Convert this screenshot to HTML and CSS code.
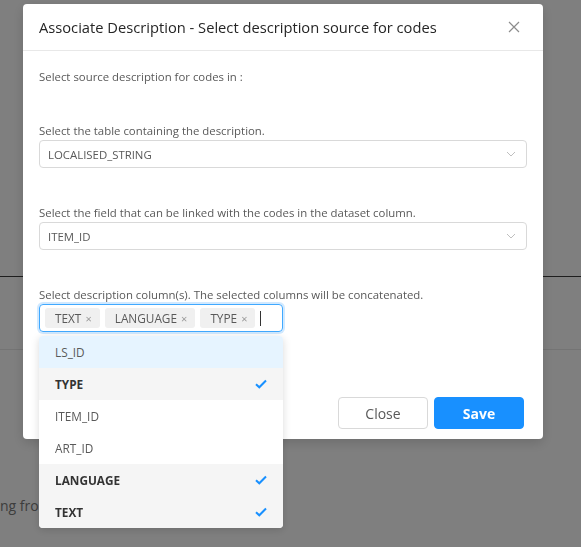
FILE: index.html
```html
<!DOCTYPE html>
<html>
<head>
<meta charset="utf-8">
<link rel="stylesheet" href="styles.css">
</head>
<body>
<div class="page">
  <div class="page-top"></div>
  <div class="page-rule dark"></div>
  <div class="page-band"></div>
  <div class="page-rule light"></div>
  <div class="page-gap"></div>
  <p class="page-text">ng from</p>
</div>
<div class="mask"></div>

<div class="modal">
  <div class="modal-header">
    <span class="modal-title">Associate Description - Select description source for codes</span>
    <svg class="close-x" width="12" height="12" viewBox="0 0 12 12"><path d="M1 1L11 11M11 1L1 11" stroke="#8c8c8c" stroke-width="1.2" fill="none"/></svg>
  </div>
  <div class="modal-body">
    <p class="intro">Select source description for codes in :</p>

    <div class="field">
      <label class="label">Select the table containing the description.</label>
      <div class="select">
        <span>LOCALISED_STRING</span>
        <svg class="chev" width="10" height="6" viewBox="0 0 10 6"><path d="M1 1L5 5L9 1" stroke="#bfbfbf" stroke-width="1" fill="none"/></svg>
      </div>
    </div>

    <div class="field">
      <label class="label">Select the field that can be linked with the codes in the dataset column.</label>
      <div class="select">
        <span>ITEM_ID</span>
        <svg class="chev" width="10" height="6" viewBox="0 0 10 6"><path d="M1 1L5 5L9 1" stroke="#bfbfbf" stroke-width="1" fill="none"/></svg>
      </div>
    </div>

    <div class="field">
      <label class="label">Select description column(s). The selected columns will be concatenated.</label>
      <div class="multi">
        <span class="tag">TEXT <i class="tag-x">×</i></span>
        <span class="tag">LANGUAGE <i class="tag-x">×</i></span>
        <span class="tag">TYPE <i class="tag-x">×</i></span>
        <span class="caret"></span>
      </div>
    </div>
  </div>
  <div class="modal-footer">
    <button class="btn">Close</button>
    <button class="btn primary">Save</button>
  </div>
</div>

<ul class="dropdown">
  <li class="opt active">LS_ID</li>
  <li class="opt selected">TYPE <svg class="check" width="12" height="10" viewBox="0 0 12 10"><path d="M1 5.2L4.3 8.3L11 1.5" stroke="#1890ff" stroke-width="2" fill="none"/></svg></li>
  <li class="opt">ITEM_ID</li>
  <li class="opt">ART_ID</li>
  <li class="opt selected">LANGUAGE <svg class="check" width="12" height="10" viewBox="0 0 12 10"><path d="M1 5.2L4.3 8.3L11 1.5" stroke="#1890ff" stroke-width="2" fill="none"/></svg></li>
  <li class="opt selected">TEXT <svg class="check" width="12" height="10" viewBox="0 0 12 10"><path d="M1 5.2L4.3 8.3L11 1.5" stroke="#1890ff" stroke-width="2" fill="none"/></svg></li>
</ul>
</body>
</html>
```
FILE: styles.css
```css
* { box-sizing: border-box; }
html, body { margin: 0; padding: 0; }
body {
  width: 581px;
  height: 547px;
  overflow: hidden;
  background: #fff;
  font-family: "Segoe UI", "Open Sans", "Noto Sans", sans-serif;
  color: #595959;
}
.page { width: 581px; }
.page-top { height: 276px; }
.page-rule { height: 1px; }
.page-rule.dark { background: #3c3c3c; }
.page-rule.light { background: #e8e8e8; }
.page-band { height: 72px; }
.page-gap { height: 146px; }
.page-text {
  margin: 0;
  font-size: 14px;
  line-height: 20px;
  color: #7a7a7a;
  text-indent: 0;
}
.mask {
  position: fixed;
  inset: 0;
  background: rgba(0, 0, 0, 0.5);
}
.modal {
  position: fixed;
  left: 23px;
  top: 4px;
  width: 520px;
  background: #fff;
  border-radius: 4px;
  box-shadow: 0 4px 12px rgba(0, 0, 0, 0.15);
}
.modal-header {
  display: flex;
  align-items: center;
  justify-content: space-between;
  height: 47px;
  padding: 0 23px 0 16px;
  border-bottom: 1px solid #e8e8e8;
}
.modal-title {
  font-size: 14.7px;
  color: #262626;
}
.close-x { display: block; }
.modal-body {
  padding: 17px 16px 55px;
}
.intro {
  margin: 0;
  font-size: 11.4px;
  line-height: 18px;
  color: #595959;
}
.field {
  margin-top: 36px;
}
.label {
  display: block;
  font-size: 11.4px;
  line-height: 18px;
  color: #595959;
}
.select {
  display: flex;
  align-items: center;
  justify-content: space-between;
  height: 28px;
  padding: 0 10px 0 8px;
  border: 1px solid #d9d9d9;
  border-radius: 4px;
  font-size: 11.4px;
  color: #595959;
}
.chev { display: block; }
.multi {
  display: flex;
  align-items: center;
  gap: 5px;
  width: 244px;
  height: 28px;
  padding: 0 5px;
  border: 1px solid #40a9ff;
  border-radius: 4px;
  box-shadow: 0 0 0 2px rgba(24, 144, 255, 0.2);
}
.tag {
  display: inline-flex;
  align-items: center;
  height: 20px;
  padding: 0 8px 0 10px;
  background: #f0f0f0;
  border-radius: 3px;
  font-size: 11.8px;
  color: #595959;
  white-space: pre;
}
.tag-x {
  font-style: normal;
  font-size: 11px;
  color: #999;
  margin-left: 1px;
}
.caret {
  width: 1px;
  height: 15px;
  background: #333;
}
.modal-footer {
  display: flex;
  justify-content: flex-end;
  gap: 6px;
  padding: 10px 19px 10px 16px;
}
.btn {
  width: 90px;
  height: 32px;
  border: 1px solid #d9d9d9;
  border-radius: 4px;
  background: #fff;
  font-family: inherit;
  font-size: 14px;
  color: #595959;
}
.btn.primary {
  background: #1890ff;
  border-color: #1890ff;
  color: #fff;
  font-weight: 700;
}
.dropdown {
  position: fixed;
  left: 39px;
  top: 336px;
  width: 244px;
  margin: 0;
  padding: 0;
  list-style: none;
  background: #fff;
  border-radius: 4px;
  box-shadow: 0 2px 8px rgba(0, 0, 0, 0.15);
  overflow: hidden;
}
.opt {
  display: flex;
  align-items: center;
  justify-content: space-between;
  height: 32px;
  padding: 0 16px;
  font-size: 11.8px;
  color: #595959;
}
.opt.active { background: #e6f4ff; }
.opt.selected {
  background: #f5f5f5;
  font-weight: 700;
  color: #333;
}
.check { display: block; }
```
